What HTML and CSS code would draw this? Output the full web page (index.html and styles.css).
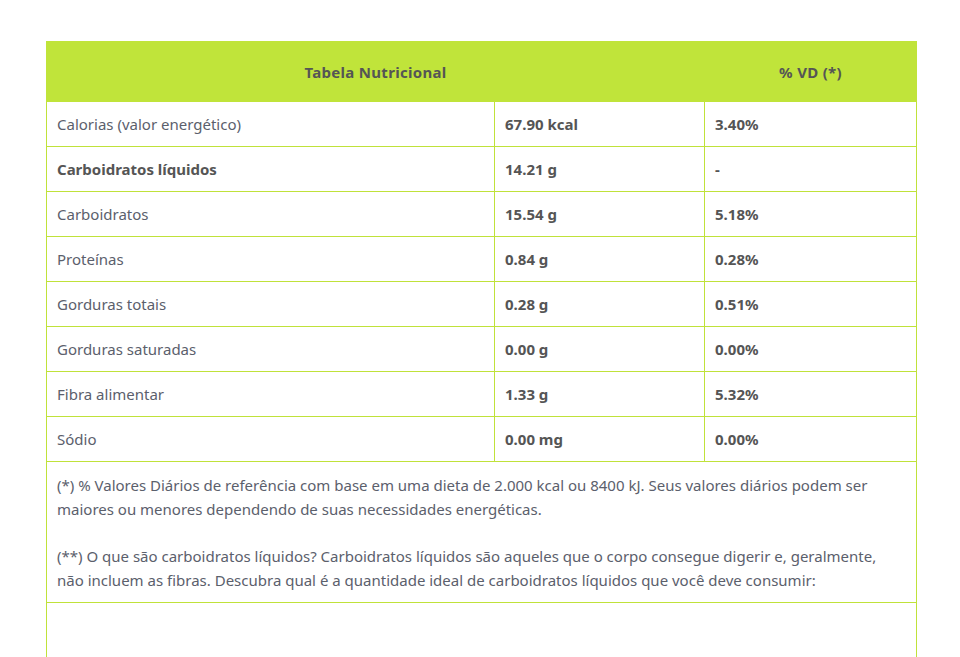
FILE: index.html
```html
<!DOCTYPE html>
<html lang="pt-BR">
<head>
<meta charset="utf-8">
<title>Tabela Nutricional</title>
<link rel="stylesheet" href="styles.css">
</head>
<body>
<div class="wrap">
  <table class="nutri">
    <colgroup>
      <col class="c1"><col class="c2"><col class="c3">
    </colgroup>
    <thead>
      <tr>
        <th colspan="2">Tabela Nutricional</th>
        <th>% VD (*)</th>
      </tr>
    </thead>
    <tbody>
      <tr><td>Calorias (valor energético)</td><td class="v">67.90 kcal</td><td class="v">3.40%</td></tr>
      <tr><td class="b">Carboidratos líquidos</td><td class="v">14.21 g</td><td class="v">-</td></tr>
      <tr><td>Carboidratos</td><td class="v">15.54 g</td><td class="v">5.18%</td></tr>
      <tr><td>Proteínas</td><td class="v">0.84 g</td><td class="v">0.28%</td></tr>
      <tr><td>Gorduras totais</td><td class="v">0.28 g</td><td class="v">0.51%</td></tr>
      <tr><td>Gorduras saturadas</td><td class="v">0.00 g</td><td class="v">0.00%</td></tr>
      <tr><td>Fibra alimentar</td><td class="v">1.33 g</td><td class="v">5.32%</td></tr>
      <tr><td>Sódio</td><td class="v">0.00 mg</td><td class="v">0.00%</td></tr>
      <tr>
        <td colspan="3" class="notes">
          <p>(*) % Valores Diários de referência com base em uma dieta de 2.000 kcal ou 8400 kJ. Seus valores diários podem ser maiores ou menores dependendo de suas necessidades energéticas.</p>
          <p>(**) O que são carboidratos líquidos? Carboidratos líquidos são aqueles que o corpo consegue digerir e, geralmente, não incluem as fibras. Descubra qual é a quantidade ideal de carboidratos líquidos que você deve consumir:</p>
        </td>
      </tr>
      <tr><td colspan="3" class="empty"></td></tr>
    </tbody>
  </table>
</div>
</body>
</html>
```
FILE: styles.css
```css
html, body {
  margin: 0;
  padding: 0;
  background: #ffffff;
}
.wrap {
  padding: 41px 44px 0 46px;
}
.nutri {
  width: 870px;
  border-collapse: collapse;
  table-layout: fixed;
  font-family: "Noto Sans", "Lato", sans-serif;
  font-size: 15px;
  color: #5b606c;
}
.c1 { width: 448px; }
.c2 { width: 210px; }
.c3 { width: 212px; }
.nutri th {
  background: #c0e43a;
  height: 59px;
  padding: 0 10px;
  font-weight: 700;
  color: #555555;
  text-align: center;
  border: 1px solid #c0e43a;
  letter-spacing: 0.3px;
}
.nutri td {
  border: 1px solid #c0e23a;
  height: 45px;
  padding: 0 10px;
  box-sizing: border-box;
  vertical-align: middle;
}
.nutri td.v, .nutri td.b {
  font-weight: 700;
  color: #555555;
}
.nutri td.notes {
  height: auto;
  padding: 11px 10px 10px 10px;
  line-height: 24px;
}
.notes p {
  margin: 0;
}
.notes p + p {
  margin-top: 23px;
}
.nutri td.empty {
  height: 55px;
  border-bottom: 0;
}
```
